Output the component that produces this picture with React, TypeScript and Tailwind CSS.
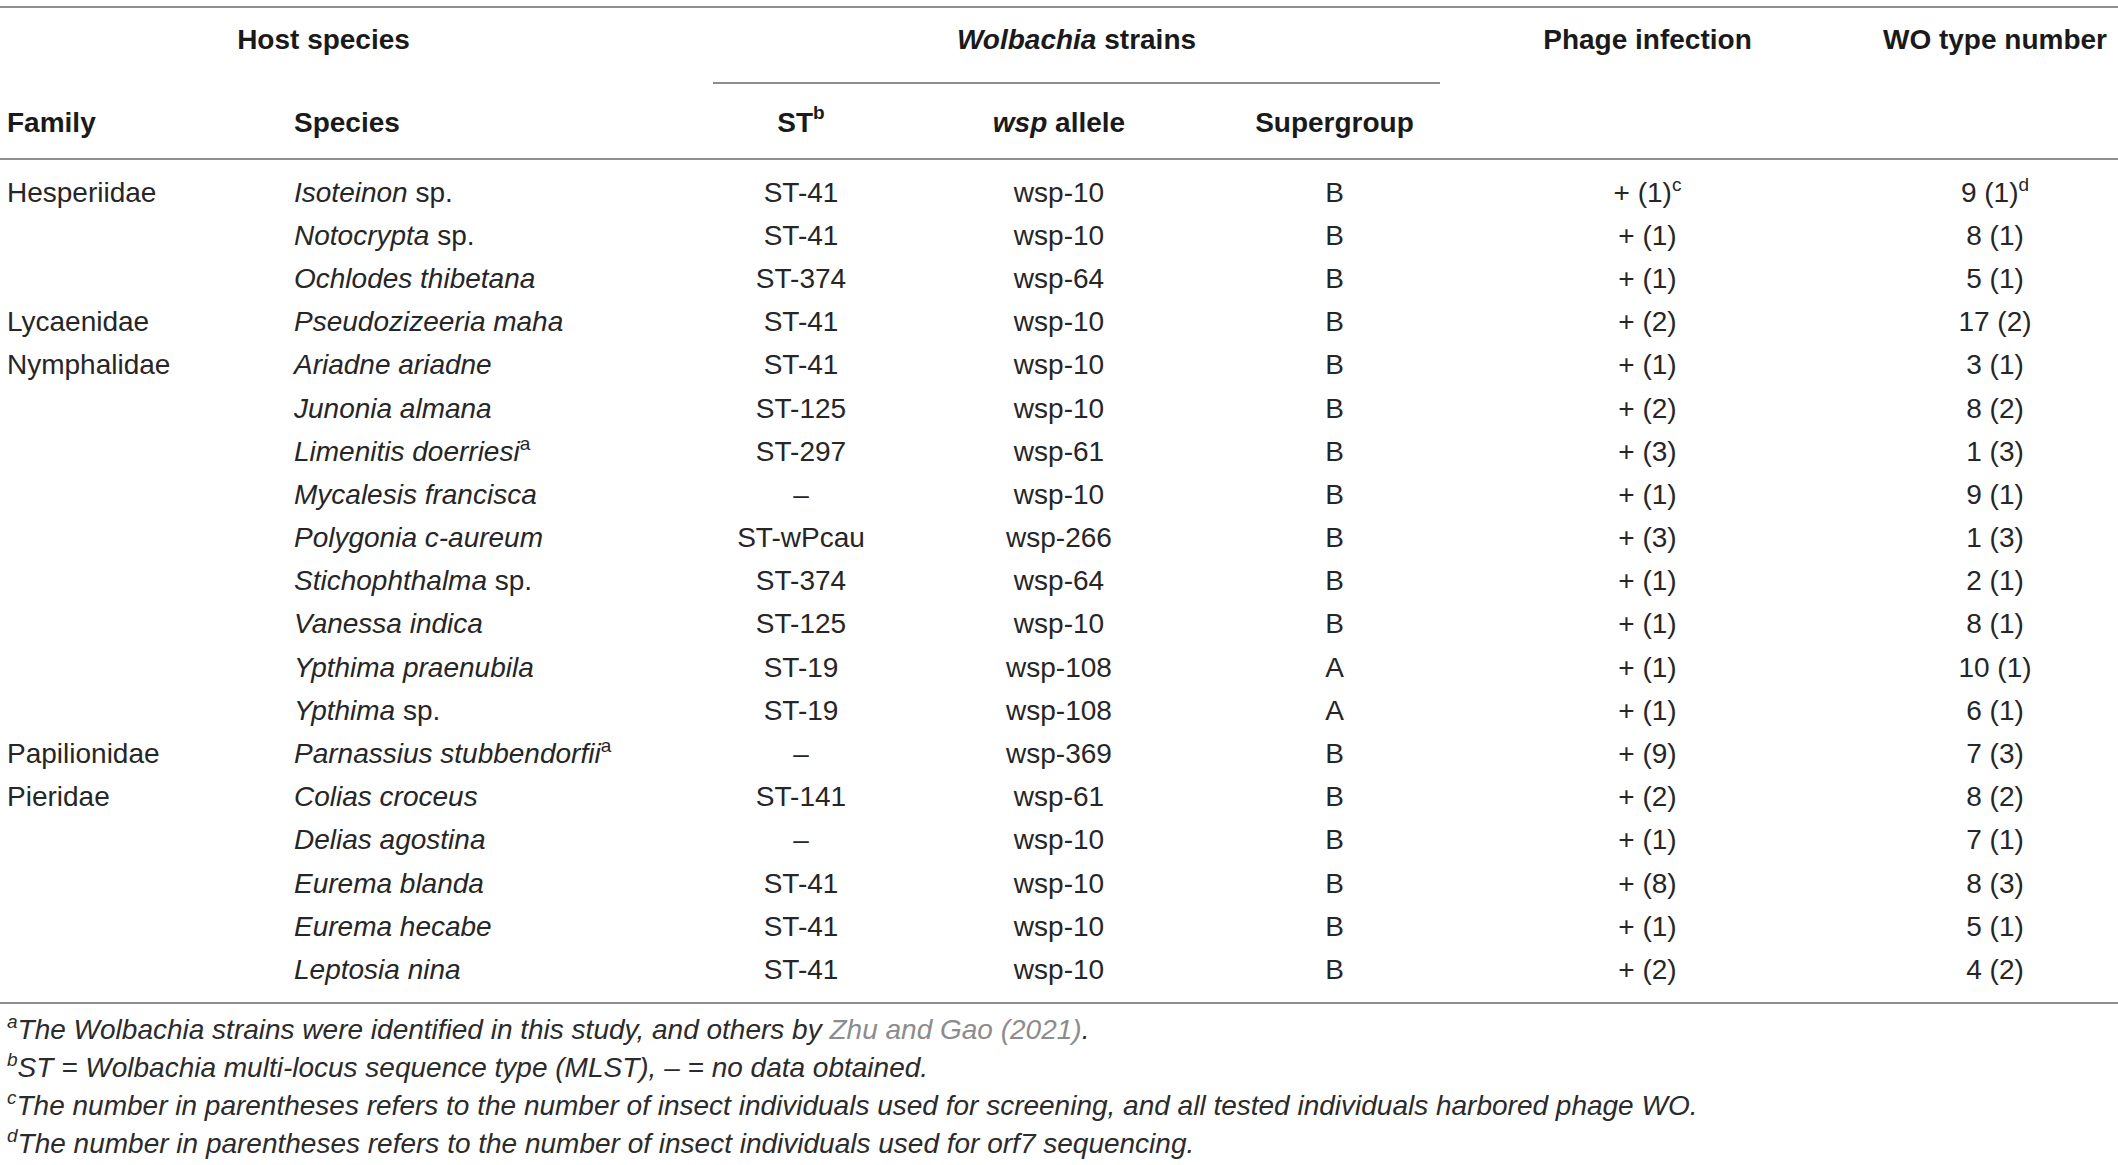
import React from "react";

type Row = {
  family?: string;
  genus: string;
  sp?: boolean;
  speciesSup?: string;
  st: string;
  wsp: string;
  group: string;
  phage: string;
  phageSup?: string;
  wo: string;
  woSup?: string;
};

const rows: Row[] = [
  { family: "Hesperiidae", genus: "Isoteinon", sp: true, st: "ST-41", wsp: "wsp-10", group: "B", phage: "+ (1)", phageSup: "c", wo: "9 (1)", woSup: "d" },
  { genus: "Notocrypta", sp: true, st: "ST-41", wsp: "wsp-10", group: "B", phage: "+ (1)", wo: "8 (1)" },
  { genus: "Ochlodes thibetana", st: "ST-374", wsp: "wsp-64", group: "B", phage: "+ (1)", wo: "5 (1)" },
  { family: "Lycaenidae", genus: "Pseudozizeeria maha", st: "ST-41", wsp: "wsp-10", group: "B", phage: "+ (2)", wo: "17 (2)" },
  { family: "Nymphalidae", genus: "Ariadne ariadne", st: "ST-41", wsp: "wsp-10", group: "B", phage: "+ (1)", wo: "3 (1)" },
  { genus: "Junonia almana", st: "ST-125", wsp: "wsp-10", group: "B", phage: "+ (2)", wo: "8 (2)" },
  { genus: "Limenitis doerriesi", speciesSup: "a", st: "ST-297", wsp: "wsp-61", group: "B", phage: "+ (3)", wo: "1 (3)" },
  { genus: "Mycalesis francisca", st: "–", wsp: "wsp-10", group: "B", phage: "+ (1)", wo: "9 (1)" },
  { genus: "Polygonia c-aureum", st: "ST-wPcau", wsp: "wsp-266", group: "B", phage: "+ (3)", wo: "1 (3)" },
  { genus: "Stichophthalma", sp: true, st: "ST-374", wsp: "wsp-64", group: "B", phage: "+ (1)", wo: "2 (1)" },
  { genus: "Vanessa indica", st: "ST-125", wsp: "wsp-10", group: "B", phage: "+ (1)", wo: "8 (1)" },
  { genus: "Ypthima praenubila", st: "ST-19", wsp: "wsp-108", group: "A", phage: "+ (1)", wo: "10 (1)" },
  { genus: "Ypthima", sp: true, st: "ST-19", wsp: "wsp-108", group: "A", phage: "+ (1)", wo: "6 (1)" },
  { family: "Papilionidae", genus: "Parnassius stubbendorfii", speciesSup: "a", st: "–", wsp: "wsp-369", group: "B", phage: "+ (9)", wo: "7 (3)" },
  { family: "Pieridae", genus: "Colias croceus", st: "ST-141", wsp: "wsp-61", group: "B", phage: "+ (2)", wo: "8 (2)" },
  { genus: "Delias agostina", st: "–", wsp: "wsp-10", group: "B", phage: "+ (1)", wo: "7 (1)" },
  { genus: "Eurema blanda", st: "ST-41", wsp: "wsp-10", group: "B", phage: "+ (8)", wo: "8 (3)" },
  { genus: "Eurema hecabe", st: "ST-41", wsp: "wsp-10", group: "B", phage: "+ (1)", wo: "5 (1)" },
  { genus: "Leptosia nina", st: "ST-41", wsp: "wsp-10", group: "B", phage: "+ (2)", wo: "4 (2)" },
];

const grid = "grid grid-cols-[287px_426px_176px_340px_211px_415px_263px]";
const rule = "border-[#8e8e8e]";

function Sup({ children }: { children: React.ReactNode }) {
  return <span className="relative -top-[11px] text-[19px] leading-none">{children}</span>;
}

export default function App() {
  return (
    <div
      className="min-h-[1165px] w-[2118px] bg-white pt-[6px] text-[#262626]"
      style={{ fontFamily: '"Liberation Sans", Arial, sans-serif' }}
    >
      {/* header */}
      <div className={`${grid} border-y-2 ${rule} text-[28px] font-bold leading-none text-[#1a1a1a]`}>
        <div className="col-span-2 flex h-[74px] items-center justify-center pb-[10px] pr-[66px]">Host species</div>
        <div className="col-span-3 flex h-[74px] items-center justify-center pb-[10px]">
          <i>Wolbachia</i>&nbsp;strains
        </div>
        <div className="flex h-[74px] items-center justify-center pb-[10px]">Phage infection</div>
        <div className="flex h-[74px] items-center justify-center pb-[10px] pl-[17px]">WO type number</div>

        <div className="flex h-[76px] items-center pl-[7px] pt-[6px]">Family</div>
        <div className="flex h-[76px] items-center pl-[7px] pt-[6px]">Species</div>
        <div className={`flex h-[76px] items-center justify-center border-t-2 ${rule} pt-[4px]`}>
          ST<Sup>b</Sup>
        </div>
        <div className={`flex h-[76px] items-center justify-center border-t-2 ${rule} pt-[4px]`}>
          <i>wsp</i>&nbsp;allele
        </div>
        <div className={`flex h-[76px] items-center justify-center border-t-2 ${rule} pt-[4px]`}>Supergroup</div>
        <div className="h-[76px]" />
        <div className="h-[76px]" />
      </div>

      {/* body */}
      <div className={`border-b-2 ${rule} pb-[10px] pt-[11px] text-[28px] leading-none`}>
        {rows.map((r, i) => (
          <div key={i} className={`${grid} h-[43.2px] items-center`}>
            <div className="pl-[7px]">{r.family}</div>
            <div className="pl-[7px]">
              <i>{r.genus}</i>
              {r.sp && " sp."}
              {r.speciesSup && <Sup>{r.speciesSup}</Sup>}
            </div>
            <div className="text-center">{r.st}</div>
            <div className="text-center">{r.wsp}</div>
            <div className="text-center">{r.group}</div>
            <div className="text-center">
              {r.phage}
              {r.phageSup && <Sup>{r.phageSup}</Sup>}
            </div>
            <div className="pl-[17px] text-center">
              {r.wo}
              {r.woSup && <Sup>{r.woSup}</Sup>}
            </div>
          </div>
        ))}
      </div>

      {/* footnotes */}
      <div className="pl-[7px] pt-[8px] text-[28px] italic leading-none text-[#2b2b2b]">
        <p className="flex h-[37.8px] items-center">
          <span><Sup>a</Sup>The Wolbachia strains were identified in this study, and others by <span className="text-[#8c8c8c]">Zhu and Gao (2021)</span>.</span>
        </p>
        <p className="flex h-[37.8px] items-center">
          <span><Sup>b</Sup>ST = Wolbachia multi-locus sequence type (MLST), – = no data obtained.</span>
        </p>
        <p className="flex h-[37.8px] items-center">
          <span><Sup>c</Sup>The number in parentheses refers to the number of insect individuals used for screening, and all tested individuals harbored phage WO.</span>
        </p>
        <p className="flex h-[37.8px] items-center">
          <span><Sup>d</Sup>The number in parentheses refers to the number of insect individuals used for orf7 sequencing.</span>
        </p>
      </div>
    </div>
  );
}
